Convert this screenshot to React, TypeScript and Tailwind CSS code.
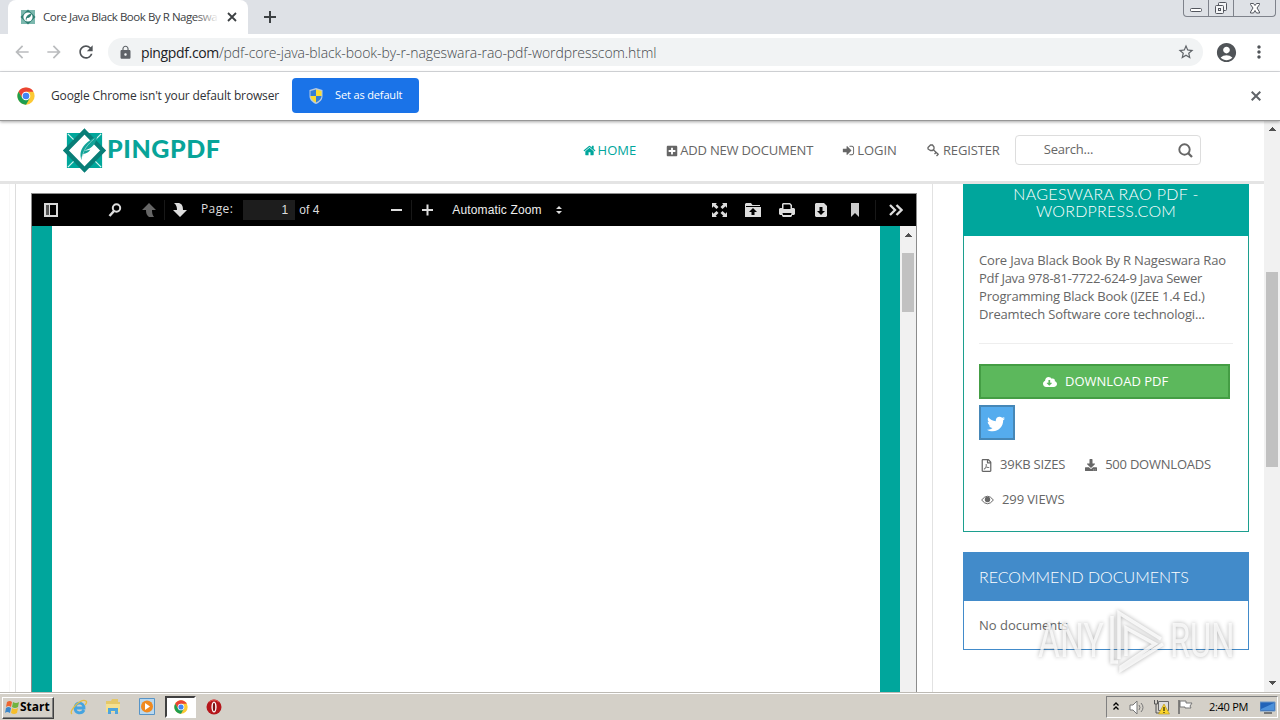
import React from "react";
import { FaSearch, FaTwitter, FaCloudDownloadAlt, FaRegFilePdf, FaDownload, FaPlusSquare } from "react-icons/fa";
import { MdLock, MdStarBorder, MdAccountCircle, MdMoreVert, MdRefresh, MdArrowBack, MdArrowForward, MdClose } from "react-icons/md";

function T({ children, w, className = "" }: { children: React.ReactNode; w: number; className?: string }) {
  const ref = React.useRef<HTMLSpanElement>(null);
  const [ls, setLs] = React.useState(0);
  React.useLayoutEffect(() => {
    const el = ref.current;
    if (!el) return;
    const n = (el.textContent || "").length;
    setLs((w - el.offsetWidth) / n);
  }, [w]);
  return (
    <span ref={ref} className={"inline-block whitespace-pre " + className} style={{ letterSpacing: ls }}>
      {children}
    </span>
  );
}

function Chrome({ size }: { size: number }) {
  return (
    <svg width={size} height={size} viewBox="0 0 48 48">
      <circle cx="24" cy="24" r="23" fill="#fcc934" />
      <path d="M4.1 12.5A23 23 0 0 1 43.9 12.5H24L14 29.7z" fill="#ea4335" />
      <path d="M4.1 12.5A23 23 0 0 0 24 47l10-17.3-20-.5z" fill="#1e9e50" />
      <circle cx="24" cy="24" r="11.5" fill="#fff" />
      <circle cx="24" cy="24" r="8.8" fill="#4285f4" />
    </svg>
  );
}

function Logo({ size }: { size: number }) {
  return (
    <svg width={size} height={size} viewBox="0 0 44 46">
      <path d="M4 5h36v36H4z" fill="#00a79b" />
      <path d="M5 6l9 9M39 6l-9 9M5 40l9-9M39 40l-9-9" stroke="#d3f3ef" strokeWidth="1.3" />
      <path d="M22 3.500L41 23 22 42.500 3 23z" fill="#fff" stroke="#087e77" strokeWidth="4.500" />
      <path d="M19 33c-3-9 0-16 16-25-1 8-5 13-13 15 3 0 4 0 6-1-2 4-6 4-8 5-1 2-1 4-1 6z" fill="#12a398" />
      <path d="M20 29c1-7 5-12 12-18" stroke="#8fd6cf" strokeWidth=".8" fill="none" />
    </svg>
  );
}

function TabLogo() {
  return (
    <svg width="16" height="16" viewBox="0 0 16 16">
      <path d="M1 1h14v14H1z" fill="#7cb8ae" />
      <path d="M8 .500L15.500 8 8 15.500.500 8z" fill="#2f7f73" />
      <circle cx="8" cy="8" r="4.600" fill="#fff" />
      <path d="M6 12c-1-4 1-6 6-8-1 3-2 5-5 5z" fill="#2f7f73" />
    </svg>
  );
}

function Triangle({ down = false }: { down?: boolean }) {
  return (
    <svg className="mr-px" width="8" height="4" viewBox="0 0 8 4" shapeRendering="crispEdges">
      <path d={down ? "M0 0h8L4 4z" : "M0 4h8L4 0z"} fill="#505050" />
    </svg>
  );
}

function Browser() {
  return (
    <>
      <div className="flex h-[34px] shrink-0 bg-[#dee1e6] pl-2">
        <div className="flex h-[34px] w-[240px] items-center rounded-t-lg bg-white pl-3">
          <TabLogo />
          <div className="relative ml-[7px] w-[176px] overflow-hidden text-[11.5px] text-[#3c4043]">
            <T w={174}>Core Java Black Book By R Nageswa</T>
            <div className="absolute inset-y-0 right-0 w-6 bg-linear-to-r from-transparent to-white" />
          </div>
          <svg className="ml-[8px]" width="10" height="10" viewBox="0 0 10 10"><path d="M1 1l8 8M9 1L1 9" stroke="#3c4043" strokeWidth="1.800" /></svg>
        </div>
        <svg className="ml-[14px] mt-[9px]" width="16" height="16" viewBox="0 0 16 16">
          <path d="M8 2v12M2 8h12" stroke="#3c4043" strokeWidth="2" />
        </svg>
        <div className="ml-auto mr-[4px] flex h-[17px] w-[93px] rounded-b-[4px] border border-t-0 border-[#7e828b]">
          <div className="flex w-[25px] justify-center border-r border-[#7e828b]">
            <svg width="14" height="16" viewBox="0 0 14 16"><rect x="1.500" y="8.500" width="11" height="3" rx="1" fill="#fff" stroke="#53565e" /></svg>
          </div>
          <div className="flex w-[25px] justify-center border-r border-[#7e828b]">
            <svg width="14" height="16" viewBox="0 0 14 16" fill="#f4f5f7" stroke="#53565e"><rect x="4.500" y="2.500" width="8" height="8" rx="1" /><rect x="1.500" y="5.500" width="8" height="8" rx="1" /><rect x="4.500" y="8.500" width="2" height="2" /></svg>
          </div>
          <div className="flex flex-1 justify-center">
            <svg width="14" height="16" viewBox="0 0 14 16"><path d="M2.500 3.500h3L7 5.500l1.500-2h3v1L9 8l2.500 4v1h-3L7 10.500l-1.500 2.500h-3v-1L5 8 2.500 4.500z" fill="#fff" stroke="#53565e" /></svg>
          </div>
        </div>
      </div>
      <div className="flex h-[38px] shrink-0 items-center border-b border-[#dadce0] bg-white pb-px pl-3">
        <MdArrowBack className="size-5 text-[#babcbe]" />
        <MdArrowForward className="ml-3 size-5 text-[#babcbe]" />
        <MdRefresh className="ml-3 size-5 text-[#505458]" />
        <div className="ml-3 flex h-7 w-[1095px] items-center rounded-full bg-[#f1f3f4] pl-[10px] text-[14px] text-[#6c7074]">
          <MdLock className="size-[15px] text-[#5f6368]" />
          <T w={78} className="ml-2 text-[#202124]">pingpdf.com</T>
          <T w={437} className="font-light text-[#45494d]">/pdf-core-java-black-book-by-r-nageswara-rao-pdf-wordpresscom.html</T>
          <MdStarBorder className="ml-auto mr-[8px] size-[18px] text-[#5f6368]" />
        </div>
        <MdAccountCircle className="ml-[12px] size-[23px] text-[#505458]" />
        <MdMoreVert className="ml-[11px] size-5 text-[#505458]" />
      </div>
      <div className="relative z-20 flex h-[49px] shrink-0 items-center border-b border-[#979797] bg-white pb-px pl-[17px] text-[12px] text-[#303236] shadow-[0_1px_3px_rgba(0,0,0,0.35)]">
        <Chrome size={18} />
        <T w={228} className="ml-4">Google Chrome isn't your default browser</T>
        <div className="ml-[13px] flex h-[35px] w-[127px] items-center rounded-[4px] bg-[#1a73e8] pl-[17px] text-[11px] text-white">
          <svg width="14" height="16" viewBox="0 0 14 16">
            <path d="M7 0l6.500 2v6c0 4-3 6.500-6.500 8C3.500 14.500.500 12 .500 8V2z" fill="#b9cbe0" />
            <path d="M7 1.500V8H1.500V3z" fill="#347fd5" /><path d="M7 1.500V8h5.500V3z" fill="#fbdc2f" />
            <path d="M7 8v6.500C4 13 1.500 11 1.500 8z" fill="#fbdc2f" /><path d="M7 8v6.500c3-1.500 5.500-3.500 5.500-6.500z" fill="#347fd5" />
          </svg>
          <T w={67} className="ml-3">Set as default</T>
        </div>
        <svg className="ml-auto mr-[19px] mt-px" width="10" height="10" viewBox="0 0 10 10"><path d="M.7.7l8.600 8.600M9.300.7L.7 9.300" stroke="#5f6368" strokeWidth="2" /></svg>
      </div>
    </>
  );
}

function Nav() {
  return (
    <div className="flex h-[63px] shrink-0 items-center border-b-[3px] border-[#e4e4e4] bg-white pb-px pl-[62px] text-[13px] text-[#666]">
      <Logo size={45} />
      <T w={114} className="-mt-1 font-['Lato'] text-[25px] font-black text-[#08a499]">PINGPDF</T>
      <div className="ml-[362px] flex items-center text-[#00a69c]">
        <svg width="13" height="13" viewBox="0 0 1792 1792" fill="currentColor"><path d="M1472 992v480q0 26-19 45t-45 19h-384v-384h-256v384h-384q-26 0-45-19t-19-45v-480q0-1 .5-3t.5-3l575-474 575 474q1 2 1 6zm223-69l-62 74q-8 9-21 11h-3q-13 0-21-7l-692-577-692 577q-12 8-24 7-13-2-21-11l-62-74q-8-10-7-23.500t11-21.500l719-599q32-26 76-26t76 26l244 204v-195q0-14 9-23t23-9h192q14 0 23 9t9 23v408l219 182q10 8 11 21.500t-7 23.500z" /></svg>
        <T w={39} className="ml-[2px]">HOME</T>
      </div>
      <div className="ml-[30px] flex items-center"><FaPlusSquare className="size-3" /><T w={133} className="ml-[2px]">ADD NEW DOCUMENT</T></div>
      <div className="ml-[29px] flex items-center">
        <svg width="13" height="13" viewBox="0 0 1792 1792" fill="currentColor"><path d="M1301 896q0 26-19 45l-544 544q-19 19-45 19t-45-19-19-45v-288h-448q-26 0-45-19t-19-45v-384q0-26 19-45t45-19h448v-288q0-26 19-45t45-19 45 19l544 544q19 19 19 45zm363-352v704q0 119-84.500 203.500t-203.500 84.500h-320q-13 0-22.500-9.500t-9.500-22.500q0-4-1-20t-.5-26.500 3-23.500 10-19.500 20.500-6.500h320q66 0 113-47t47-113v-704q0-66-47-113t-113-47h-312l-11.500-1-11.500-3-8-5.500-7-9-2-13.500q0-4-1-20t-.5-26.500 3-23.500 10-19.500 20.500-6.500h320q119 0 203.500 84.500t84.500 203.500z" /></svg>
        <T w={40} className="ml-[2px]">LOGIN</T>
      </div>
      <div className="ml-[30px] flex items-center">
        <svg width="13" height="13" viewBox="0 0 13 13" fill="none" stroke="currentColor" strokeWidth="1.300"><path d="M1 3.500L3.500 1h2L7 3v2L5.500 6.500h-2L1 5z" /><path d="M6 5.500l5.500 5M7.500 10l2-2M9.500 12l2-2" /></svg>
        <T w={57} className="ml-[3px]">REGISTER</T>
      </div>
      <div className="-mt-px ml-[15px] flex h-[30px] w-[186px] items-center rounded-[4px] border border-[#ddd] pl-7">
        <T w={49}>Search...</T>
        <svg className="ml-auto mr-[7px]" width="15" height="15" viewBox="0 0 15 15"><circle cx="6.500" cy="6.500" r="5.200" stroke="#666" strokeWidth="1.900" fill="none" /><path d="M10 10l4 4" stroke="#666" strokeWidth="2.300" /></svg>
      </div>
    </div>
  );
}

function Sep() {
  return <div className="h-5 w-px bg-[#181818]" />;
}

function Viewer() {
  return (
    <div className="flex w-[886px] flex-col border border-b-0 border-[#8c8c8c] bg-white">
      <div className="flex h-8 shrink-0 items-center bg-black text-[12px] text-[#ddd]">
        <svg className="ml-3" width="14" height="14" viewBox="0 0 14 14"><path d="M1 1h12v12H1z" fill="none" stroke="#d9d9d9" strokeWidth="2" /><path d="M2 2h3v10H2z" fill="#555" /><path d="M5 1h1v12H5z" fill="#d9d9d9" /></svg>
        <svg className="ml-[50px]" width="14" height="14" viewBox="0 0 14 14" fill="none" stroke="#ddd"><circle cx="8.500" cy="5" r="3.700" strokeWidth="2" /><path d="M6 8l-4.500 5" strokeWidth="2.500" /></svg>
        <svg className="ml-[19px]" width="16" height="14" viewBox="0 0 16 14"><path d="M8 0l7 7h-4c0 3 .5 5 2 7H8C5.500 12 5 10 5 7H1z" fill="#666" /></svg>
        <div className="ml-[7px]"><Sep /></div>
        <svg className="ml-[7px]" width="16" height="14" viewBox="0 0 16 14"><path d="M8 14l7-7h-4c0-4-1-6-4-7H2c2.500 2 3 4 3 7H1z" fill="#ddd" /></svg>
        <T w={32} className="-mt-0.5 ml-[13px]">Page:</T>
        <div className="ml-[10px] flex h-5 w-[52px] items-center justify-end bg-[#1d1d1d] pr-[7px] font-['Liberation_Sans']">1</div>
        <T w={20} className="ml-1 font-['Liberation_Sans']">of 4</T>
        <svg className="ml-[72px]" width="11" height="2"><path d="M0 0h11v2H0z" fill="#ddd" /></svg>
        <div className="ml-[9px]"><Sep /></div>
        <svg className="ml-[10px]" width="11" height="12" viewBox="0 0 11 12"><path d="M4.500.500h2v11h-2zM0 5h11v2H0z" fill="#ddd" /></svg>
        <T w={89} className="ml-[19px] font-['Liberation_Sans'] text-[#eee]">Automatic Zoom</T>
        <svg className="ml-[14px]" width="6" height="8" viewBox="0 0 6 8"><path d="M0 3h6L3 0zM0 5h6L3 8z" fill="#ddd" /></svg>
        <div className="ml-auto mr-3 flex items-center">
          <svg width="15" height="14" viewBox="0 0 15 14" fill="#ddd"><path d="M0 0h5L3.700 1.300 6.500 4 4.500 6 1.500 3.200 0 5zM15 0h-5l1.300 1.300L8.500 4l2 2 3-2.800L15 5zM0 14h5l-1.300-1.300L6.500 10l-2-2-3 2.800L0 9zM15 14h-5l1.300-1.300L8.500 10l2-2 3 2.800L15 9z" /></svg>
          <svg className="ml-[18px]" width="16" height="14" viewBox="0 0 16 14"><path d="M0 14V1l1-1h5l1.500 2H15v1H1v1h15v10z" fill="#ddd" /><path d="M8 5l4 4h-2.500v3h-3V9H4z" fill="#000" /></svg>
          <svg className="ml-[18px]" width="16" height="14" viewBox="0 0 16 14"><path d="M3 5V1l1-1h7l2 2v3h2l1 1v5l-1 1h-2v1l-1 1H4l-1-1v-1H1l-1-1V6l1-1zM4.500 1.500V6h7V2.500l-1-1zM3.500 10l.5 2h8l.5-2z" fill="#ddd" fillRule="evenodd" /></svg>
          <svg className="ml-[20px]" width="12" height="14" viewBox="0 0 12 14"><path d="M0 1l1-1h8l3 3v10l-1 1H1l-1-1z" fill="#ddd" /><path d="M4.500 4h3v4H10l-4 4-4-4h2.500z" fill="#000" /></svg>
          <svg className="ml-[24px]" width="8" height="14" viewBox="0 0 8 14"><path d="M0 0h8v14L4 10l-4 4z" fill="#ccc" /></svg>
          <div className="ml-[16px]"><Sep /></div>
          <svg className="ml-[13px] mr-px" width="14" height="12" viewBox="0 0 14 12"><path d="M1 1l5 5-5 5M7.500 1l5 5-5 5" fill="none" stroke="#ddd" strokeWidth="2.300" /></svg>
        </div>
      </div>
      <div className="flex flex-1">
        <div className="w-5 bg-[#00a69c]" />
        <div className="flex-1 bg-white" />
        <div className="w-5 bg-[#00a69c]" />
        <div className="flex w-4 flex-col items-center bg-[#f1f1f1] pt-[7px]">
          <Triangle />
          <div className="mt-4 h-[59px] w-[12px] bg-[#c1c1c1]" />
        </div>
      </div>
    </div>
  );
}

function Sidebar() {
  return (
    <div className="ml-[30px] flex w-[286px] flex-col text-[13px] text-[#666]">
      <div className="flex h-[348px] flex-col border border-t-0 border-[#1c9f8f] bg-white">
        <div className="-mx-px flex h-[52px] shrink-0 flex-col items-center bg-[#00a69c] pt-px font-['Lato'] text-[16px] font-light leading-[17px] text-white">
          <T w={185}>NAGESWARA RAO PDF -</T>
          <T w={140}>WORDPRESS.COM</T>
        </div>
        <div className="mx-[15px] flex h-[108px] shrink-0 flex-col items-start border-b border-[#eee] pt-[15px] leading-[18px]">
          <T w={247}>Core Java Black Book By R Nageswara Rao</T>
          <T w={223}>Pdf Java 978-81-7722-624-9 Java Sewer</T>
          <T w={226}>Programming Black Book (JZEE 1.4 Ed.)</T>
          <T w={226}>Dreamtech Software core technologi...</T>
        </div>
        <div className="ml-[15px] mt-5 flex h-[35px] w-[251px] shrink-0 items-center border-2 border-[#449d44] bg-[#5cb85c] pl-[62px] pt-px text-white">
          <FaCloudDownloadAlt className="h-[14px] w-[14px]" />
          <T w={103} className="ml-2">DOWNLOAD PDF</T>
        </div>
        <div className="ml-[15px] mt-[6px] flex h-[35px] w-9 shrink-0 items-center justify-center border-2 border-[#4687b7] bg-[#55acee] pr-0.5 pt-0.5 text-white"><FaTwitter className="size-[18px]" /></div>
        <div className="ml-[17px] mt-4 flex h-[18px] items-center">
          <FaRegFilePdf className="h-[13px] w-[11px]" /><T w={65} className="ml-2">39KB SIZES</T>
          <FaDownload className="ml-5 size-3" /><T w={106} className="ml-2">500 DOWNLOADS</T>
        </div>
        <div className="ml-[17px] mt-[17px] flex h-[18px] items-center">
          <svg width="13" height="10" viewBox="0 0 13 10"><path d="M.6 5Q6.500-2.500 12.400 5 6.500 12.500.6 5z" fill="none" stroke="currentColor" /><circle cx="6.500" cy="4.500" r="2.700" fill="currentColor" /></svg><T w={62} className="ml-2">299 VIEWS</T>
        </div>
      </div>
      <div className="mt-5 h-[98px] border border-[#428bca] bg-white">
        <div className="flex h-12 items-center bg-[#428bca] pb-px pl-[15px] font-['Lato'] text-[16px] font-light text-white"><T w={210}>RECOMMEND DOCUMENTS</T></div>
        <div className="flex h-[48px] items-center pl-[15px] pt-0.5"><T w={89}>No documents</T></div>
      </div>
    </div>
  );
}

function Watermark() {
  return (
    <div className="absolute left-[1038px] top-[608px] z-30 flex h-[66px] w-[196px] items-center drop-shadow-[0_0_2px_rgba(0,0,0,0.4)]">
      <span className="w-[63px] origin-left scale-x-[0.7] whitespace-nowrap font-['Roboto'] text-[48px] leading-[66px] text-white/75">ANY</span>
      <svg className="ml-[7px]" width="58" height="64" viewBox="0 0 58 64" fill="none" stroke="#fff" strokeWidth="3.500" opacity=".8"><path d="M4 7v46h6M11 50V4l42 26M18 47V19l29 16-34 23v3l42-26" /></svg>
      <span className="ml-[4px] w-[62px] origin-left scale-x-[0.68] whitespace-nowrap font-['Roboto'] text-[48px] leading-[66px] text-white/75">RUN</span>
    </div>
  );
}

function Taskbar() {
  return (
    <div className="relative z-40 flex h-7 shrink-0 items-center border-t border-[#bdbab4] bg-[#d4d0c8] pl-[2px] shadow-[inset_0_1px_0_#fff]">
      <div className="mt-[2px] flex h-[22px] w-[52px] items-center border border-t-white border-l-white border-r-[#404040] border-b-[#404040] pb-px pl-[2px] shadow-[inset_-1px_-1px_0_#808080]">
        <svg width="15" height="14" viewBox="0 0 15 14"><path d="M2 2q3-2 5 0L6 7Q3.500 5 1 7z" fill="#ed6530" /><path d="M8 2q3 2 6 0l-1 5q-3 2-6 0z" fill="#71b33f" /><path d="M1 8q2.500-2 5 0l-1 5q-3-2-5 0z" fill="#3b87cb" /><path d="M7 8q3 2 6 0l-1 5q-3 2-6 0z" fill="#f6be2c" /></svg>
        <T w={30} className="text-[12px] font-bold text-black">Start</T>
      </div>
      <svg className="ml-[16px]" width="18" height="18" viewBox="0 0 18 18" fill="none"><path d="M14 12c-2 4-9 4-9-2 0-7 9-6 9 0H5" stroke="#45a4e0" strokeWidth="2.800" /><path d="M2 16c-4-3 9-16 14-13 1 1 0 3-1 4" stroke="#e4bd43" strokeWidth="1.300" /></svg>
      <svg className="ml-[17px]" width="16" height="17" viewBox="0 0 16 17"><path d="M1 3h5l1-2h6v3h2v10H1z" fill="#e5c868" /><path d="M1 6h14v8H1z" fill="#f5e08f" /><path d="M3 16v-6h10v6h-3v-3H6v3z" fill="#4fa5dc" /></svg>
      <svg className="ml-[18px]" width="16" height="17" viewBox="0 0 16 17"><path d="M.500.500h15v16H.500z" fill="#b9d8ef" stroke="#5794c7" /><circle cx="8" cy="8.500" r="6" fill="#f08a20" /><path d="M6 5l5 3.500L6 12z" fill="#fff" /></svg>
      <div className="ml-[10px] mt-px flex h-[22px] w-[31px] items-center justify-center border-2 border-t-[#404040] border-l-[#404040] border-r-white border-b-white bg-white"><Chrome size={14} /></div>
      <svg className="ml-[10px]" width="16" height="16" viewBox="0 0 16 16"><circle cx="8" cy="8" r="7.500" fill="#b5161b" /><path d="M3 3q5-4 10 0" stroke="#e75b55" fill="none" /><ellipse cx="8" cy="8" rx="2.600" ry="5.500" fill="#fff" /><ellipse cx="8" cy="8" rx="1.200" ry="4.300" fill="#7c1215" /></svg>
      <div className="ml-auto mr-[2px] mt-px flex h-[22px] w-[172px] items-center border border-t-[#808080] border-l-[#808080] border-r-white border-b-white pl-[6px]">
        <svg className="mb-0.5" width="6" height="8" viewBox="0 0 6 8"><path d="M.500 3.500L3 1l2.500 2.500M.500 7.500L3 5l2.500 2.500" fill="none" stroke="#000" strokeWidth="1.300" /></svg>
        <svg className="ml-[10px]" width="16" height="15" viewBox="0 0 16 15" fill="none" stroke="#777"><path d="M1 5h3l4-4v13L4 10H1z" fill="#fff" /><path d="M10 5q2 2.500 0 5M12 3q4 4.500 0 9" /></svg>
        <svg className="ml-[8px]" width="17" height="16" viewBox="0 0 17 16"><path d="M5.500 2.500h10v9h-10z" fill="#ddd" stroke="#666" /><path d="M1.500 1v4h3V1M3 5v9h4" fill="none" stroke="#555" /><path d="M11 5l5.500 10h-11z" fill="#fbd52b" stroke="#b49218" strokeWidth=".6" /><path d="M10.500 8h1v4h-1zM10.500 13h1v1h-1z" fill="#000" /></svg>
        <svg className="ml-[7px]" width="16" height="16" viewBox="0 0 16 16"><path d="M3 2h6v2h6l-2 3 1 2H8V8H3z" fill="#fff" stroke="#777" /><path d="M2 1v14" stroke="#666" strokeWidth="1.500" /></svg>
        <T w={39} className="ml-[16px] text-[11px] text-black">2:40 PM</T>
        <svg className="ml-[12px]" width="16" height="13" viewBox="0 0 16 13"><path d="M0 1h15v9H0z" fill="#2263b8" stroke="#6c97c6" /><path d="M1 8L14 2v7H1z" fill="#4d91da" /><path d="M4 11h8v2H4z" fill="#777" /></svg>
      </div>
    </div>
  );
}

export default function App() {
  return (
    <div className="relative flex h-[720px] w-[1280px] flex-col overflow-hidden bg-white font-['Open_Sans','Noto_Sans',sans-serif]">
      <Browser />
      <div className="flex min-h-0 flex-1">
        <div className="flex min-w-0 flex-1 flex-col">
          <Nav />
          <div className="flex min-h-0 flex-1 bg-white">
            <div className="w-[10px] border-r border-[#f7f7f7]" />
            <div className="flex w-[923px] border-r border-[#e2e2e2] pt-[9px]">
              <div className="-mt-[9px] mr-[15px] w-[6px] border-r border-[#ddd]" />
              <Viewer />
            </div>
            <Sidebar />
          </div>
        </div>
        <div className="flex w-4 shrink-0 flex-col items-center bg-[#f1f1f1] pb-[7px] pt-[6px]">
          <Triangle />
          <div className="mt-[141px] h-[195px] w-[12px] bg-[#c1c1c1]" />
          <div className="mt-auto"><Triangle down /></div>
        </div>
      </div>
      <Taskbar />
      <Watermark />
    </div>
  );
}
